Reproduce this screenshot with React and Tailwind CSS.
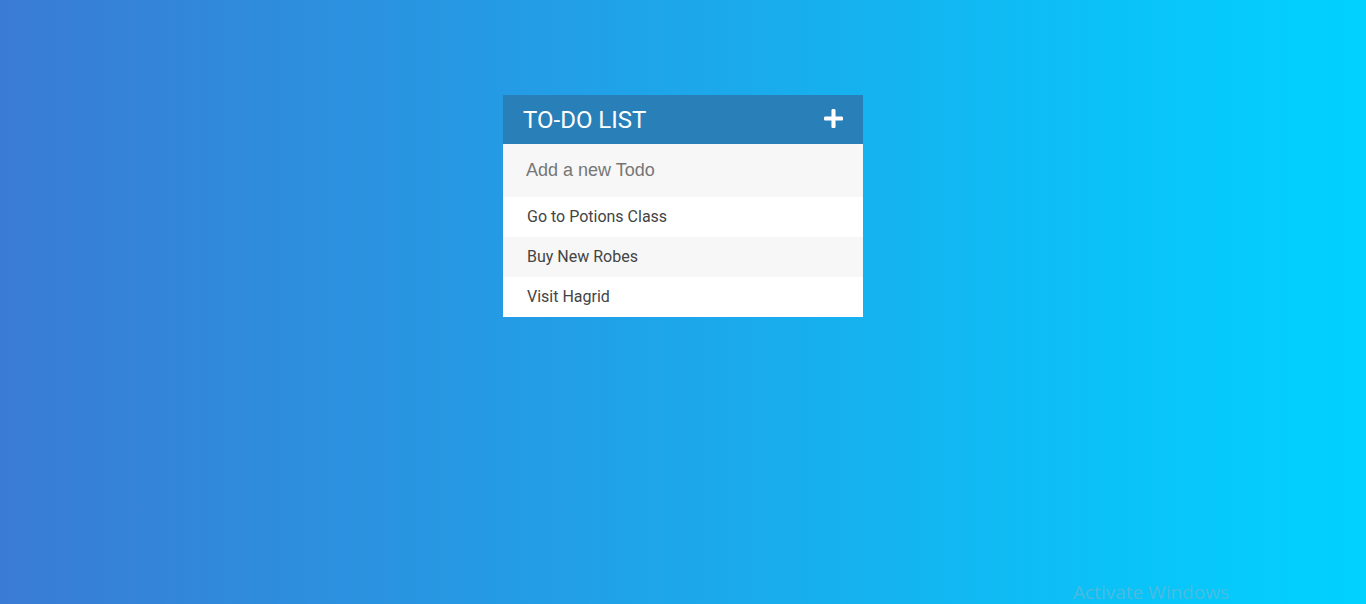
export default function App() {
  const todos = ['Go to Potions Class', 'Buy New Robes', 'Visit Hagrid'];

  return (
    <div className="relative h-[604px] w-full overflow-hidden bg-[linear-gradient(90deg,#3a7bd5_0%,#00d2ff_100%)] font-['Roboto',sans-serif]">
      <div className="mx-auto w-[360px] pt-[95px]">
        <div className="flex h-[49px] items-center justify-between bg-[#2980b9] pl-[20px] pr-[20px] text-white">
          <h1 className="text-[24px] font-normal uppercase leading-none">To-Do List</h1>
          <svg width="19" height="19" viewBox="0 32 448 448" fill="currentColor" className="mb-[3px]">
            <path d="M416 208H272V64c0-17.67-14.33-32-32-32h-32c-17.67 0-32 14.33-32 32v144H32c-17.67 0-32 14.330-32 32v32c0 17.67 14.33 32 32 32h144v144c0 17.67 14.33 32 32 32h32c17.67 0 32-14.33 32-32V304h144c17.67 0 32-14.33 32-32v-32c0-17.67-14.33-32-32-32z" />
          </svg>
        </div>
        <input
          type="text"
          placeholder="Add a new Todo"
          className="block h-[53px] w-full bg-[#f7f7f7] pl-[23px] font-['Liberation_Sans',Arial,sans-serif] text-[18px] text-[#666] outline-none placeholder:text-[#767676]"
        />
        <ul>
          {todos.map((todo, i) => (
            <li
              key={todo}
              className={`flex h-[40px] items-center pl-[24px] text-[16px] text-[#444] ${i % 2 === 1 ? 'bg-[#f7f7f7]' : 'bg-white'}`}
            >
              {todo}
            </li>
          ))}
        </ul>
      </div>
      <div className="absolute left-[1073px] top-[578px] font-['Open_Sans',sans-serif] text-[19px] text-[#5cb8d8]/80">
        Activate Windows
      </div>
    </div>
  );
}
